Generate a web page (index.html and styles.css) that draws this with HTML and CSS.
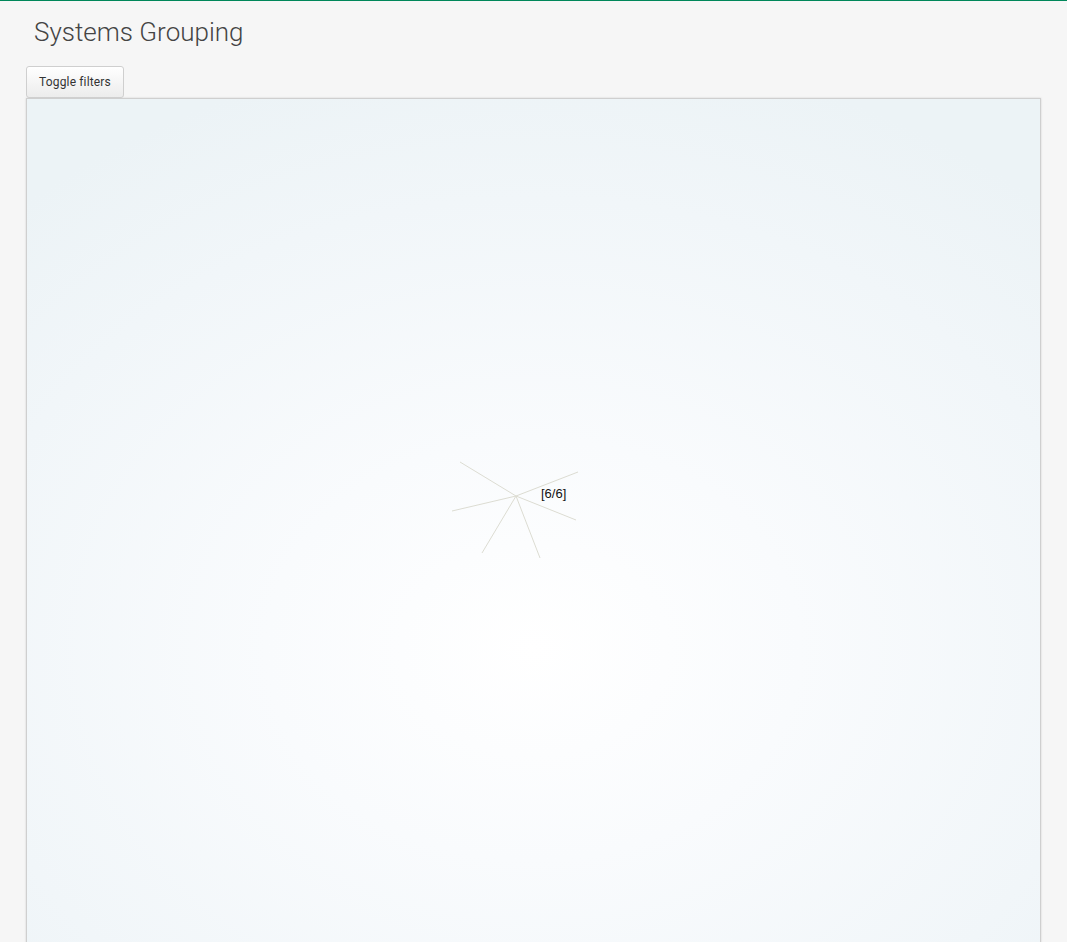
FILE: index.html
```html
<!DOCTYPE html>
<html>
<head>
<meta charset="utf-8">
<link rel="stylesheet" href="styles.css">
</head>
<body>
<div class="topline"></div>
<div class="page">
  <h1 class="title">Systems Grouping</h1>
  <button class="btn">Toggle filters</button>
  <div class="panel">
    <svg class="graph" width="1014" height="844" viewBox="0 0 1014 844">
      <g stroke="#dcdcd2" stroke-width="1" fill="none">
        <line x1="489" y1="397" x2="433" y2="363"/>
        <line x1="489" y1="397" x2="551" y2="373"/>
        <line x1="489" y1="397" x2="425" y2="412"/>
        <line x1="489" y1="397" x2="549" y2="421"/>
        <line x1="489" y1="397" x2="455" y2="454"/>
        <line x1="489" y1="397" x2="513" y2="459"/>
      </g>
      <text x="514" y="399" class="label">[6/6]</text>
    </svg>
  </div>
</div>
</body>
</html>
```
FILE: styles.css
```css
html, body {
  margin: 0;
  padding: 0;
  background: #f6f6f6;
  font-family: Roboto, "Liberation Sans", sans-serif;
  overflow: hidden;
}
.topline {
  height: 1px;
  background: #00875a;
}
.page {
  padding: 0 26px 0 26px;
  width: 1015px;
}
.title {
  margin: 0;
  padding: 15px 0 0 8px;
  font-weight: 300;
  font-size: 26px;
  line-height: 32px;
  color: #444;
  height: 50px;
}
.btn {
  display: block;
  height: 32px;
  width: 98px;
  padding: 0;
  font-family: Roboto, "Liberation Sans", sans-serif;
  font-size: 12px;
  letter-spacing: 0.15px;
  color: #333;
  background: linear-gradient(#ffffff, #ececec);
  border: 1px solid #cfcfcf;
  border-radius: 3px;
  margin: 0;
  position: relative;
  z-index: 1;
}
.panel {
  height: 860px;
  width: 1013px;
  border: 1px solid #cfcfcf;
  box-shadow: 0 0 2px rgba(0,0,0,0.15);
  background: radial-gradient(ellipse 75% 70% at 50% 64%, #ffffff 0%, #f9fbfd 35%, #f1f6f9 75%, #ecf3f6 100%);
}
.graph {
  display: block;
}
.label {
  font-family: "Liberation Sans", Arial, sans-serif;
  font-size: 13px;
  fill: #111;
}
```
